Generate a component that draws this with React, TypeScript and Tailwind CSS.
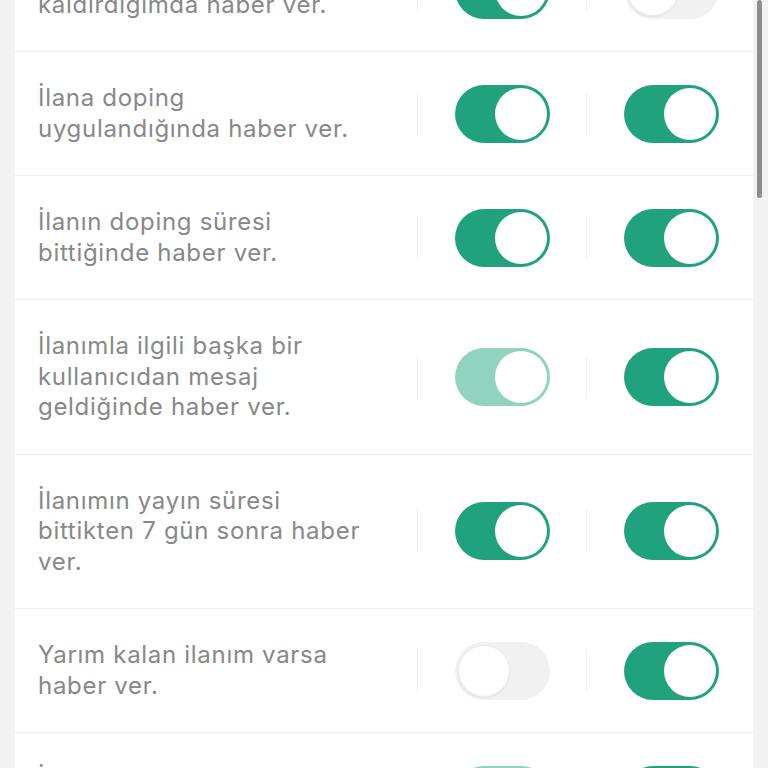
type ToggleState = 'on' | 'off' | 'dim';

interface Row {
  lines: string[];
  first: ToggleState;
  second: ToggleState;
}

const rows: Row[] = [
  { lines: ['İlanımı yayından', 'kaldırdığımda haber ver.'], first: 'on', second: 'off' },
  { lines: ['İlana doping', 'uygulandığında haber ver.'], first: 'on', second: 'on' },
  { lines: ['İlanın doping süresi', 'bittiğinde haber ver.'], first: 'on', second: 'on' },
  { lines: ['İlanımla ilgili başka bir', 'kullanıcıdan mesaj', 'geldiğinde haber ver.'], first: 'dim', second: 'on' },
  { lines: ['İlanımın yayın süresi', 'bittikten 7 gün sonra haber', 'ver.'], first: 'on', second: 'on' },
  { lines: ['Yarım kalan ilanım varsa', 'haber ver.'], first: 'off', second: 'on' },
  { lines: ['İlanımın fiyatı düştüğünde', 'haber ver.'], first: 'dim', second: 'on' },
];

function Toggle({ state }: { state: ToggleState }) {
  if (state === 'off') {
    return (
      <div className="w-[95px] h-[58px] shrink-0 rounded-full bg-[#f1f1f1] p-[3px] flex items-center justify-start">
        <div className="w-[52px] h-[52px] rounded-full bg-white border border-[#ebebeb] shadow-[0_1px_2px_rgba(0,0,0,0.06)]" />
      </div>
    );
  }
  const track = state === 'on' ? 'bg-[#21a27f]' : 'bg-[#90d3bf]';
  return (
    <div className={`w-[95px] h-[58px] shrink-0 rounded-full p-[3px] flex items-center justify-end ${track}`}>
      <div className="w-[52px] h-[52px] rounded-full bg-white" />
    </div>
  );
}

function Divider() {
  return <div className="w-px h-[44px] shrink-0 bg-[#f0f0f0]" />;
}

export default function App() {
  return (
    <div
      className="relative w-[768px] h-[768px] overflow-hidden bg-[#f2f2f2]"
      style={{ fontFamily: 'Inter, "Open Sans", Arial, sans-serif' }}
    >
      <div className="mx-[15px] -mt-[72px] bg-white">
        {rows.map((row, idx) => (
          <div key={idx} className="flex items-center border-b border-[#efefef]">
            <div className="flex-1 pl-[23px] py-[31px]">
              <p className="text-[24px] leading-[30.5px] tracking-[0.7px] text-[#888888]">
                {row.lines.map((line, i) => (
                  <span key={i} className="block whitespace-nowrap">{line}</span>
                ))}
              </p>
            </div>
            <Divider />
            <div className="ml-[37px] mr-[36px]">
              <Toggle state={row.first} />
            </div>
            <Divider />
            <div className="ml-[37px] mr-[34px]">
              <Toggle state={row.second} />
            </div>
          </div>
        ))}
      </div>
      <div className="absolute right-[6px] top-0 w-[5px] h-[198px] rounded-full bg-[#8e8e8e]" />
    </div>
  );
}
